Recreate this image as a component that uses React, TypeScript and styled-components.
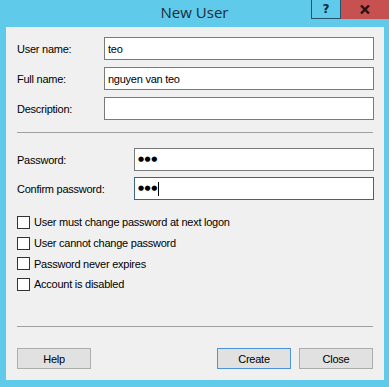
import styled, { createGlobalStyle } from "styled-components";

const GlobalStyle = createGlobalStyle`
  html, body {
    margin: 0;
    padding: 0;
    background: #5fcaea;
  }
  * {
    box-sizing: border-box;
  }
`;

const Window = styled.div`
  width: 389px;
  height: 387px;
  background: #5fcaea;
  display: flex;
  flex-direction: column;
  padding: 0 5px 7px 6px;
  font-family: "Liberation Sans", Arial, sans-serif;
  font-size: 11px;
  letter-spacing: -0.25px;
  color: #000;
`;

const TitleBar = styled.div`
  height: 27px;
  margin: 0 -5px 0 -6px;
  display: grid;
  grid-template-columns: 1fr auto 1fr;
  align-items: start;
`;

const Title = styled.div`
  grid-column: 2;
  font-family: "Open Sans", "Noto Sans", sans-serif;
  font-size: 15px;
  letter-spacing: 0;
  line-height: 24px;
  color: #1b2c3a;
`;

const Controls = styled.div`
  grid-column: 3;
  justify-self: end;
  display: flex;
  height: 19px;
`;

const HelpBox = styled.div`
  width: 29px;
  height: 19px;
  border: 1px solid #27506d;
  border-top: none;
  border-right: none;
  background: #5fcaea;
  display: flex;
  align-items: center;
  justify-content: center;
  font-family: "DejaVu Sans", sans-serif;
  font-weight: 700;
  font-size: 12px;
  letter-spacing: 0;
  color: #10263a;
`;

const CloseBox = styled.div`
  width: 49px;
  height: 19px;
  background: #c75150;
  border-left: 1px solid #27506d;
  display: flex;
  align-items: center;
  justify-content: center;
`;

const Client = styled.div`
  flex: 1;
  background: #f0f0f0;
  display: flex;
  flex-direction: column;
  padding: 10px 10px 11px 11px;
`;

const Row = styled.div<{ $labelWidth: number }>`
  display: flex;
  align-items: center;
  height: 23px;
  margin-bottom: 7px;
  & > span:first-child {
    width: ${(p) => p.$labelWidth}px;
    flex-shrink: 0;
  }
`;

const Field = styled.div<{ $focused?: boolean }>`
  flex: 1;
  height: 23px;
  background: #fff;
  border: 1px solid ${(p) => (p.$focused ? "#3a6683" : "#7a7a7a")};
  display: flex;
  align-items: center;
  padding: 0 3px;
  font-size: 11px;
`;

const Dots = styled.span`
  font-family: "DejaVu Sans", sans-serif;
  font-size: 7px;
  letter-spacing: 0.5px;
  line-height: 1;
`;

const Caret = styled.span`
  display: inline-block;
  width: 1px;
  height: 14px;
  background: #000;
`;

const Separator = styled.div`
  height: 1px;
  background: #a0a0a0;
  margin-right: 1px;
`;

const Checks = styled.div`
  display: flex;
  flex-direction: column;
  margin-top: 12px;
`;

const CheckRow = styled.label`
  display: flex;
  align-items: center;
  gap: 4px;
  height: 20.7px;
`;

const Box = styled.span`
  width: 13px;
  height: 13px;
  border: 1px solid #333;
  background: #fff;
`;

const Spacer = styled.div`
  flex: 1;
`;

const ButtonBar = styled.div`
  display: flex;
  align-items: center;
  margin-top: 21px;
  gap: 8px;
  padding-right: 1px;
`;

const Button = styled.button<{ $primary?: boolean }>`
  width: 74px;
  height: 21px;
  background: #e1e1e1;
  border: 1px solid ${(p) => (p.$primary ? "#4f92d6" : "#adadad")};
  font-family: "Liberation Sans", Arial, sans-serif;
  font-size: 11px;
  letter-spacing: -0.25px;
  color: #000;
  padding: 0;
  &:first-child {
    margin-right: auto;
  }
`;

const checks = [
  "User must change password at next logon",
  "User cannot change password",
  "Password never expires",
  "Account is disabled",
];

export default function App() {
  return (
    <>
      <GlobalStyle />
      <Window>
        <TitleBar>
          <Title>New User</Title>
          <Controls>
            <HelpBox>?</HelpBox>
            <CloseBox>
              <svg width="10" height="9" viewBox="0 0 10 9">
                <path d="M1 0.5 L9 8.5 M9 0.5 L1 8.5" stroke="#2a1010" strokeWidth="2.4" />
              </svg>
            </CloseBox>
          </Controls>
        </TitleBar>
        <Client>
          <Row $labelWidth={87}>
            <span>User name:</span>
            <Field>teo</Field>
          </Row>
          <Row $labelWidth={87}>
            <span>Full name:</span>
            <Field>nguyen van teo</Field>
          </Row>
          <Row $labelWidth={87}>
            <span>Description:</span>
            <Field />
          </Row>
          <Separator style={{ marginTop: 5, marginBottom: 15 }} />
          <Row $labelWidth={117} style={{ marginBottom: 6 }}>
            <span>Password:</span>
            <Field>
              <Dots>●●●</Dots>
            </Field>
          </Row>
          <Row $labelWidth={117} style={{ marginBottom: 0 }}>
            <span>Confirm password:</span>
            <Field $focused>
              <Dots>●●●</Dots>
              <Caret />
            </Field>
          </Row>
          <Checks>
            {checks.map((c) => (
              <CheckRow key={c}>
                <Box />
                <span>{c}</span>
              </CheckRow>
            ))}
          </Checks>
          <Spacer />
          <Separator />
          <ButtonBar>
            <Button>Help</Button>
            <Button $primary>Create</Button>
            <Button>Close</Button>
          </ButtonBar>
        </Client>
      </Window>
    </>
  );
}
